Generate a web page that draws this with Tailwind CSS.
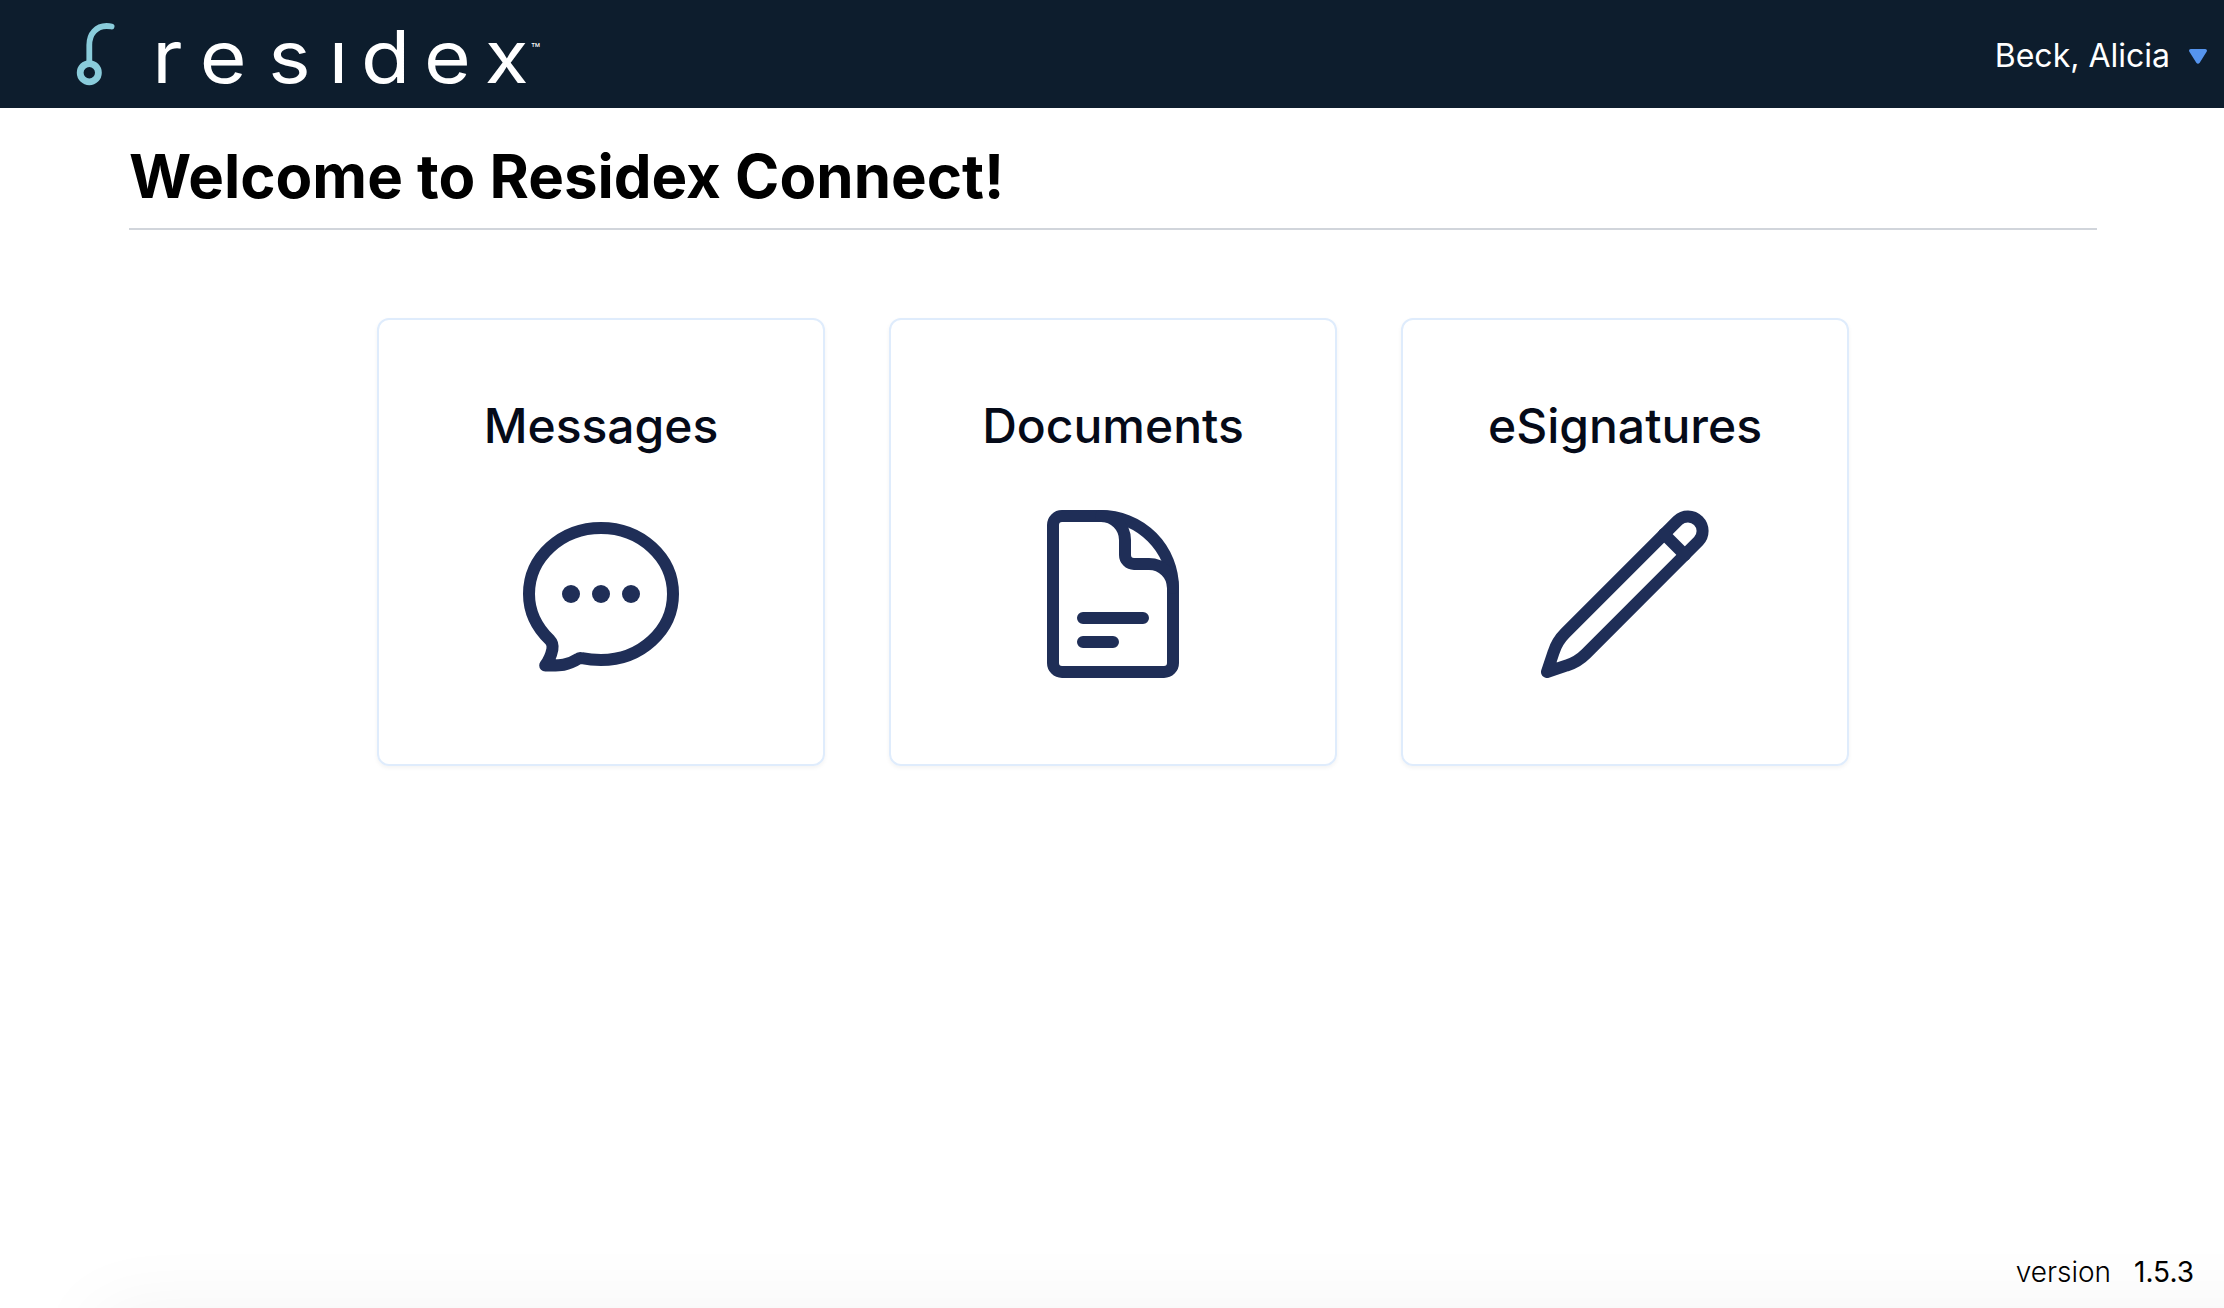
<!DOCTYPE html>
<html lang="en">

<head>
    <meta charset="UTF-8" />
    <meta name="viewport" content="width=device-width, initial-scale=1.0" />
    <script src="https://cdn.jsdelivr.net/npm/@tailwindcss/browser@4"></script>
    <title>Residex Connect</title>
</head>

<body class="bg-white text-black font-['Inter',sans-serif] flex flex-col h-screen overflow-hidden">
    <header class="bg-[#0d1d2d] h-[108px] shrink-0 flex items-center justify-between pr-[17px]">
        <a href="#" class="block">
            <svg width="560" height="108" viewBox="0 0 560 108" fill="none">
                <defs>
                    <!-- hides the dot of the i -->
                    <clipPath id="dotless">
                        <path d="M140 0H322V120H140zM322 43H352V120H322zM352 0H560V120H352z" />
                    </clipPath>
                </defs>
                <g stroke="#8accdb">
                    <circle cx="89.3" cy="72.7" r="9.1" stroke-width="6.8" />
                    <path d="M89.3 62V45C89.3 33.5 96.5 26 106.5 26C109 26 110 26.1 111.6 26.5" stroke-width="5.8" stroke-linecap="round" />
                </g>
                <g clip-path="url(#dotless)">
                    <text x="138.4 181.6 243.8 298.8 328.2 385.4 440.6" y="83" font-size="73" font-weight="400" fill="#fff" transform="scale(1.1 1)">residex</text>
                </g>
                <text x="531" y="54" font-size="15" fill="#fff">™</text>
            </svg>
        </a>
        <button class="flex items-center gap-[19px] text-white text-[32px] leading-10 pt-1">
            <span>Beck, Alicia</span>
            <svg width="18" height="15" viewBox="0 0 18 15" fill="#5594ed">
                <path d="M1.8 0H16.2C17.8 0 18.4 1.5 17.6 2.8L10.7 13.7C9.8 15.2 8.2 15.2 7.3 13.7L.4 2.8C-.4 1.5 .2 0 1.8 0Z" />
            </svg>
        </button>
    </header>

    <main class="flex-1 pl-[129px] pr-[127px]">
        <h1 class="text-[60px] leading-[72px] font-bold h-[122px] pt-8 border-b-2 border-[#d1d5db] whitespace-nowrap">Welcome to Residex Connect!</h1>
        <section class="flex justify-center gap-16 pt-[88px]">
            <a href="#" class="size-[448px] border-2 border-[#dfecfc] rounded-xl shadow-[0_2px_4px_rgba(0,0,0,0.05)] flex flex-col items-center pt-[76px]">
                <h2 class="text-[48px] leading-[60px] font-medium text-[#050a18]">Messages</h2>
                <svg class="mt-[54px]" width="168" height="168" viewBox="0 0 28 28" fill="none" stroke="#1f2e57" stroke-width="2" stroke-linecap="round" stroke-linejoin="round">
                    <path d="M14 3C20.6 3 26 7.9 26 14S20.6 25 14 25C12.9 25 11.8 24.9 10.8 24.7C10.5 24.6 10.4 24.6 10.2 24.8C8.2 26.1 6.7 25.9 4.7 25.9C5.3 25.1 5.7 24.2 5.9 23.2C6 22.5 5.9 22.1 5.5 21.7C3.2 19.5 2 17 2 14C2 7.9 7.4 3 14 3Z" />
                    <g fill="#1f2e57" stroke="none">
                        <circle cx="9" cy="14" r="1.5" />
                        <circle cx="14" cy="14" r="1.5" />
                        <circle cx="19" cy="14" r="1.5" />
                    </g>
                </svg>
            </a>
            <a href="#" class="size-[448px] border-2 border-[#dfecfc] rounded-xl shadow-[0_2px_4px_rgba(0,0,0,0.05)] flex flex-col items-center pt-[76px]">
                <h2 class="text-[48px] leading-[60px] font-medium text-[#050a18]">Documents</h2>
                <svg class="mt-[54px]" width="168" height="168" viewBox="0 0 28 28" fill="none" stroke="#1f2e57" stroke-width="2" stroke-linecap="round" stroke-linejoin="round">
                    <path d="M24 13V25.5A1.5 1.5 0 0 1 22.5 27H5.5A1.5 1.5 0 0 1 4 25.5V2.5A1.5 1.5 0 0 1 5.5 1H12A12 12 0 0 1 24 13Z" />
                    <path d="M12 1A4 4 0 0 1 16 5V7.5A1.5 1.5 0 0 0 17.5 9H20A4 4 0 0 1 24 13" />
                    <path d="M9 18H19M9 22H14" />
                </svg>
            </a>
            <a href="#" class="size-[448px] border-2 border-[#dfecfc] rounded-xl shadow-[0_2px_4px_rgba(0,0,0,0.05)] flex flex-col items-center pt-[76px]">
                <h2 class="text-[48px] leading-[60px] font-medium text-[#050a18]">eSignatures</h2>
                <svg class="mt-[54px]" width="168" height="168" viewBox="0 0 28 28" fill="none" stroke="#1f2e57" stroke-width="2" stroke-linecap="round" stroke-linejoin="round">
                    <path d="M22.8 1.75A2.44 2.44 0 0 1 26.25 5.2L7.5 23.95C6.5 24.95 5.6 25.5 4.3 25.9L1 27L2.1 23.7C2.5 22.4 3.05 21.5 4.05 20.5Z" />
                    <path d="M20.5 4L24 7.5" />
                </svg>
            </a>
        </section>
    </main>

    <footer class="relative overflow-clip h-[72px] shrink-0 flex justify-end gap-[23px] pr-[30px] pt-[18px] text-[28px] leading-9">
        <!-- soft shade along the bottom edge -->
        <div class="absolute bottom-0 left-[145px] -right-24 h-0 shadow-[0_50px_80px_48px_rgba(0,0,0,0.05)]"></div>
        <span class="relative font-light">version</span>
        <span class="relative">1.5.3</span>
    </footer>
</body>

</html>
